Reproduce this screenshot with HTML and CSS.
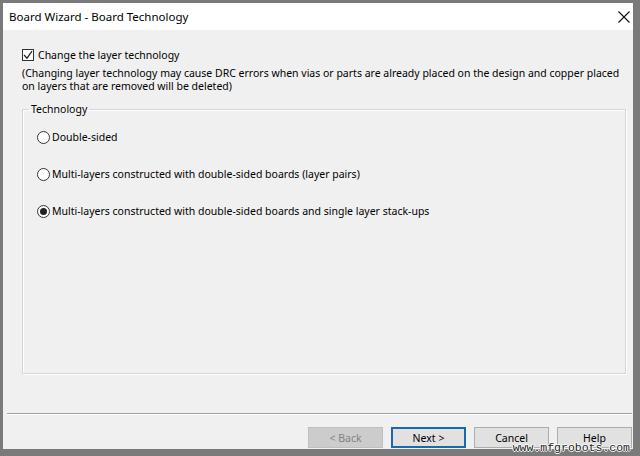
FILE: index.html
```html
<!DOCTYPE html>
<html lang="en">
<head>
    <meta charset="UTF-8">
    <title>Board Wizard - Board Technology</title>
    <link rel="stylesheet" href="styles.css">
</head>
<body>
    <div class="window">
        <div class="titlebar">
            <span class="title">Board Wizard - Board Technology</span>
            <svg class="close" width="12" height="12" viewBox="0 0 12 12">
                <path d="M0.5 0.5 L11.5 11.5 M11.5 0.5 L0.5 11.5" stroke="#111" stroke-width="1.1" fill="none"/>
            </svg>
        </div>

        <div class="content">
            <label class="check-row">
                <span class="checkbox">
                    <svg width="10" height="10" viewBox="0 0 10 10">
                        <path d="M1 5 L4 8.2 L9 1.2" stroke="#222" stroke-width="1.2" fill="none"/>
                    </svg>
                </span>
                Change the layer technology
            </label>
            <p class="note">(Changing layer technology may cause DRC errors when vias or parts are already placed on the design and copper placed on layers that are removed will be deleted)</p>

            <fieldset class="group">
                <legend>Technology</legend>
                <div class="radio-row"><span class="radio"></span>Double-sided</div>
                <div class="radio-row"><span class="radio"></span>Multi-layers constructed with double-sided boards (layer pairs)</div>
                <div class="radio-row"><span class="radio checked"></span>Multi-layers constructed with double-sided boards and single layer stack-ups</div>
            </fieldset>
        </div>

        <div class="footer">
            <button class="btn" disabled>&lt; Back</button>
            <button class="btn default">Next &gt;</button>
            <button class="btn">Cancel</button>
            <button class="btn">Help</button>
            <span class="watermark">www.mfgrobots.com</span>
        </div>
    </div>
</body>
</html>
```

FILE: styles.css
```css
* {
    margin: 0;
    padding: 0;
    box-sizing: border-box;
}

body {
    width: 640px;
    height: 456px;
    background: #7a7a7a;
    padding: 3px 7px 7px 3px;
    font-family: 'Noto Sans', 'Open Sans', sans-serif;
    font-size: 10.5px;
    color: #000;
    overflow: hidden;
}

.window {
    height: 446px;
    background: #f0f0f0;
    display: flex;
    flex-direction: column;
}

.titlebar {
    height: 27px;
    background: #fff;
    display: flex;
    align-items: center;
    justify-content: space-between;
    padding: 0 3px 1px 6px;
    flex-shrink: 0;
}

.title {
    font-size: 11.5px;
}

.close {
    margin-top: 1px;
}

.content {
    flex: 1;
    padding: 18px 7px 0 19px;
}

.check-row {
    display: flex;
    align-items: center;
    gap: 4px;
    height: 14px;
    line-height: 14px;
}

.checkbox {
    width: 12px;
    height: 12px;
    border: 1px solid #333;
    background: #fff;
    display: flex;
    align-items: center;
    justify-content: center;
}

.note {
    margin-top: 5px;
    line-height: 13px;
}

.group {
    margin-top: 10px;
    height: 271px;
    border: 1px solid #d5d5d5;
    box-shadow: inset 1px 1px 0 #fff, 1px 1px 0 #fff;
    padding: 14px 0 0 14px;
}

.group legend {
    margin-left: -8px;
    padding: 0 2px;
    line-height: 13px;
}

.radio-row {
    display: flex;
    align-items: center;
    gap: 2px;
    height: 14px;
    margin-bottom: 23px;
}

.radio {
    width: 13px;
    height: 13px;
    border: 1px solid #333;
    border-radius: 50%;
    background: #fff;
    display: flex;
    align-items: center;
    justify-content: center;
}

.radio.checked::after {
    content: '';
    width: 7px;
    height: 7px;
    border-radius: 50%;
    background: #222;
}

.footer {
    position: relative;
    height: 36px;
    margin: 0 1px 0 4px;
    border-top: 1px solid #a0a0a0;
    box-shadow: inset 0 1px 0 #fff;
    display: flex;
    justify-content: flex-end;
    align-items: flex-start;
    gap: 8px;
    padding-top: 13px;
}

.btn {
    width: 75px;
    height: 21px;
    background: #e1e1e1;
    border: 1px solid #adadad;
    font-family: inherit;
    font-size: 10.5px;
    color: #000;
}

.btn:disabled {
    background: #cccccc;
    border-color: #bfbfbf;
    color: #838383;
}

.btn.default {
    border: 2px solid #1b67b0;
}

.watermark {
    position: absolute;
    right: 2px;
    bottom: -5px;
    font-family: 'Liberation Mono', monospace;
    font-size: 11.5px;
    color: #222;
    text-shadow: 1px 0 0 #fff, -1px 0 0 #fff, 0 1px 0 #fff, 0 -1px 0 #fff;
}
```
